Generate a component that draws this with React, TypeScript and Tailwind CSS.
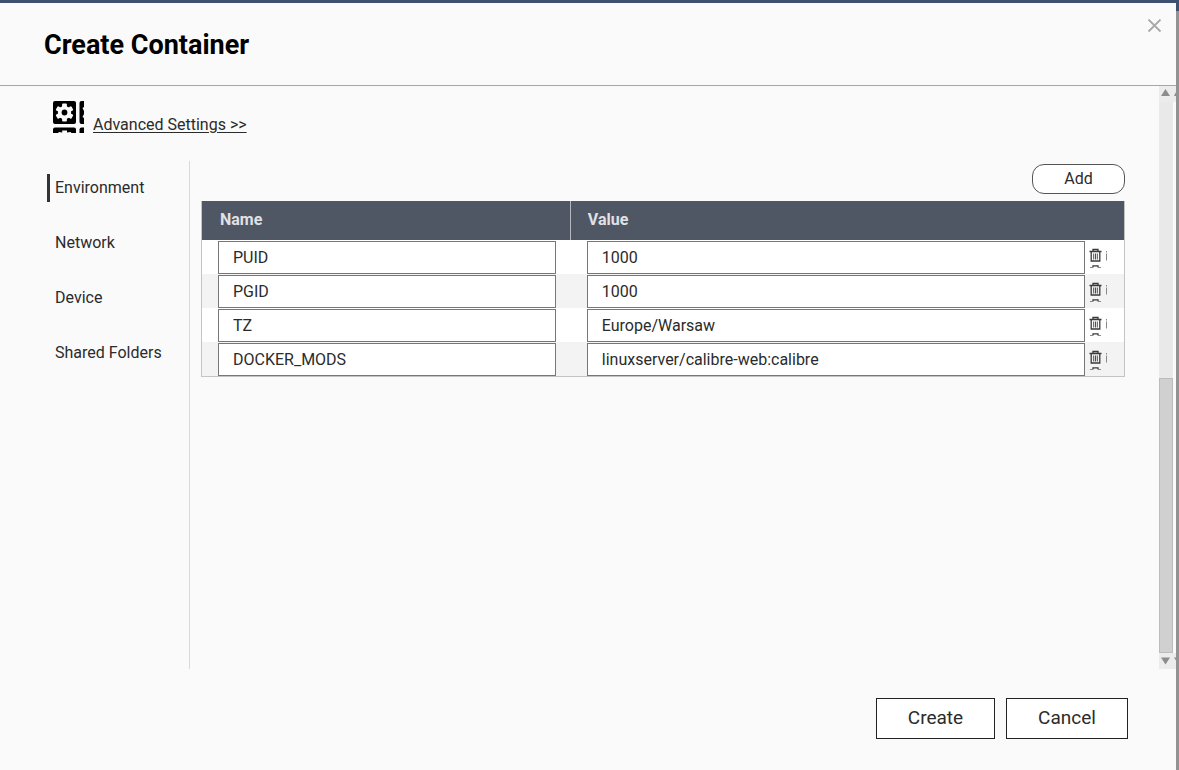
import { useState } from 'react';

interface EnvVar {
  id: number;
  name: string;
  value: string;
}

const tabs = ['Environment', 'Network', 'Device', 'Shared Folders'];

const TrashIcon = () => (
  <svg width="19" height="20" viewBox="0 0 19 20" fill="none" stroke="#3a3a3a">
    <path d="M0.500 3.500h12M4 3.500V1.500h5v2" strokeWidth="1.3" />
    <path d="M2.200 4v9h8.600V4" strokeWidth="1.3" />
    <path d="M4.700 5.500v6M6.500 5.500v6M8.300 5.500v6" strokeWidth="0.9" />
    <path d="M17.500 3v1.500M17.500 5.500v7" strokeWidth="1" stroke="#888" />
    <path d="M4 19v-1.200h5V19" strokeWidth="1.3" />
    <path d="M1 19.500h3.500M8.500 19.500H12" strokeWidth="1" stroke="#888" />
  </svg>
);

const SettingsIcon = () => (
  <svg width="31" height="33" viewBox="0 0 31 33" fill="#000">
    <rect x="0" y="1" width="23" height="23" rx="2" />
    <g fill="#fafafa">
      <circle cx="11.5" cy="12.5" r="6.6" />
      <rect x="9.1" y="3.500" width="4.8" height="18" rx="1" />
      <rect x="9.1" y="3.500" width="4.8" height="18" rx="1" transform="rotate(60 11.5 12.5)" />
      <rect x="9.1" y="3.500" width="4.8" height="18" rx="1" transform="rotate(120 11.5 12.5)" />
    </g>
    <circle cx="11.5" cy="12.5" r="2.9" />
    <path d="M31 1h-2.500a2 2 0 0 0-2 2v19a2 2 0 0 0 2 2H31v-6l-1.500-1 1.500-3v-3l-1.500-3L31 7z" />
    <path d="M0 33v-3.500a2 2 0 0 1 2-2h19a2 2 0 0 1 2 2V33h-4.500l-1-1-3.500.5V30.500H9.200v2L6 32l-1 1z" />
    <path d="M26.500 33v-3.500a2 2 0 0 1 2-2H31V33z" />
  </svg>
);

const App = () => {
  const [activeTab, setActiveTab] = useState('Environment');
  const [envVars, setEnvVars] = useState<EnvVar[]>([
    { id: 1, name: 'PUID', value: '1000' },
    { id: 2, name: 'PGID', value: '1000' },
    { id: 3, name: 'TZ', value: 'Europe/Warsaw' },
    { id: 4, name: 'DOCKER_MODS', value: 'linuxserver/calibre-web:calibre' },
  ]);

  const handleAdd = () => {
    setEnvVars([...envVars, { id: Date.now(), name: '', value: '' }]);
  };

  const handleRemove = (id: number) => {
    setEnvVars(envVars.filter((item) => item.id !== id));
  };

  const handleChange = (id: number, field: 'name' | 'value', text: string) => {
    setEnvVars(envVars.map((item) => (item.id === id ? { ...item, [field]: text } : item)));
  };

  return (
    <div className="min-h-screen flex flex-col bg-[#fafafa] font-['Roboto',sans-serif] text-base text-[#2b2b2b]">
      <div className="h-[3px] bg-[#3f4f72]" />
      <div className="flex-1 flex">
        <div className="flex-1 min-w-0 flex flex-col">
          <header className="flex justify-between items-start h-[83px] pl-11 pr-[10px] border-b border-[#a6a6a6]">
            <h1 className="pt-6 text-[27px] leading-9 font-bold text-black">Create Container</h1>
            <button type="button" aria-label="Close" className="mt-3 p-1">
              <svg width="15" height="22" viewBox="0 0 15 22" stroke="#a8a8a8" strokeWidth="1.8">
                <path d="M1.500 0.500l12 12M13.500 0.500l-12 12" />
              </svg>
            </button>
          </header>

          <div className="flex-1 flex">
            <div className="flex-1 min-w-0 flex flex-col pr-[34px]">
              <a href="#advanced" className="flex items-start pt-[14px] pl-[53px] gap-[9px]">
                <SettingsIcon />
                <span className="pt-[13px] underline underline-offset-2">Advanced Settings &gt;&gt;</span>
              </a>

              <div className="flex-1 flex pt-6">
                <nav className="w-[190px] shrink-0 pl-[47px] pt-[13px] border-r border-[#d9d9d9] flex flex-col items-start gap-[27px]">
                  {tabs.map((tab) => (
                    <button
                      key={tab}
                      type="button"
                      onClick={() => setActiveTab(tab)}
                      className={`h-7 pl-[5px] border-l-3 whitespace-nowrap ${
                        activeTab === tab ? 'border-[#333]' : 'border-transparent'
                      }`}
                    >
                      {tab}
                    </button>
                  ))}
                </nav>

                <main className="flex-1 min-w-0 flex flex-col pl-[11px] pt-[3px]">
                  <button
                    type="button"
                    onClick={handleAdd}
                    className="self-end w-[93px] h-[30px] pb-px border border-[#555] rounded-xl bg-white"
                  >
                    Add
                  </button>

                  <div className="mt-[7px] border border-t-0 border-[#c4c4c4]">
                    <table className="w-full table-fixed border-separate border-spacing-0">
                      <thead className="bg-[#4f5664] text-[#e0e1e4] text-left">
                        <tr className="h-[39px]">
                          <th className="w-2/5 pl-[18px] pb-[2px] font-bold border-r border-[#b5b8be]">Name</th>
                          <th className="pl-[17px] pb-[2px] font-bold">Value</th>
                          <th className="w-[39px]" aria-label="Remove" />
                        </tr>
                      </thead>
                      <tbody>
                        {envVars.map((item) => (
                          <tr key={item.id} className="h-[34px] bg-white even:bg-[#f3f3f3]">
                            <td className="p-0 pt-px pl-4 pr-[15px]">
                              <input
                                type="text"
                                aria-label="Name"
                                value={item.name}
                                onChange={(e) => handleChange(item.id, 'name', e.target.value)}
                                className="block w-full h-[33px] px-[14px] border border-[#777] bg-white"
                              />
                            </td>
                            <td className="p-0 pt-px pl-4">
                              <input
                                type="text"
                                aria-label="Value"
                                value={item.value}
                                onChange={(e) => handleChange(item.id, 'value', e.target.value)}
                                className="block w-full h-[33px] px-[14px] border border-[#777] bg-white"
                              />
                            </td>
                            <td className="p-0 pl-1 align-top">
                              <button
                                type="button"
                                aria-label={`Remove ${item.name}`}
                                onClick={() => handleRemove(item.id)}
                                className="block mt-2"
                              >
                                <TrashIcon />
                              </button>
                            </td>
                          </tr>
                        ))}
                      </tbody>
                    </table>
                  </div>
                </main>
              </div>
            </div>

            {/* scroll bar */}
            <div className="w-[17px] flex flex-col" aria-hidden="true">
              <div className="h-4 bg-[#ececec] flex items-center">
                <svg width="17" height="16" viewBox="0 0 17 16" fill="#8c8c8c">
                  <path d="M2 10l4.500-7 4.500 7zM15 10l2-4v4z" />
                </svg>
              </div>
              <div className="flex-1 flex flex-col justify-end w-[14px] bg-[#e9e9e9]">
                <div className="h-1/2 border border-[#bcbcbc] bg-[#d0d0d0]" />
              </div>
              <div className="h-4 bg-[#ececec] flex items-center">
                <svg width="17" height="16" viewBox="0 0 17 16" fill="#8c8c8c">
                  <path d="M2 4.500h9l-4.500 7zM15 4.500h2v3z" />
                </svg>
              </div>
            </div>
          </div>

          <footer className="flex justify-end gap-[11px] pt-[29px] pb-[31px] pr-12 text-[19px]">
            <button type="button" className="w-[119px] h-[41px] border border-[#222] bg-white">
              Create
            </button>
            <button type="button" className="w-[122px] h-[41px] border border-[#222] bg-white">
              Cancel
            </button>
          </footer>
        </div>

        <div className="w-[3px] flex flex-col">
          <div className="h-2 bg-[#3f4f72]" />
          <div className="flex-1 bg-[#929292]" />
        </div>
      </div>
    </div>
  );
};

export default App;
